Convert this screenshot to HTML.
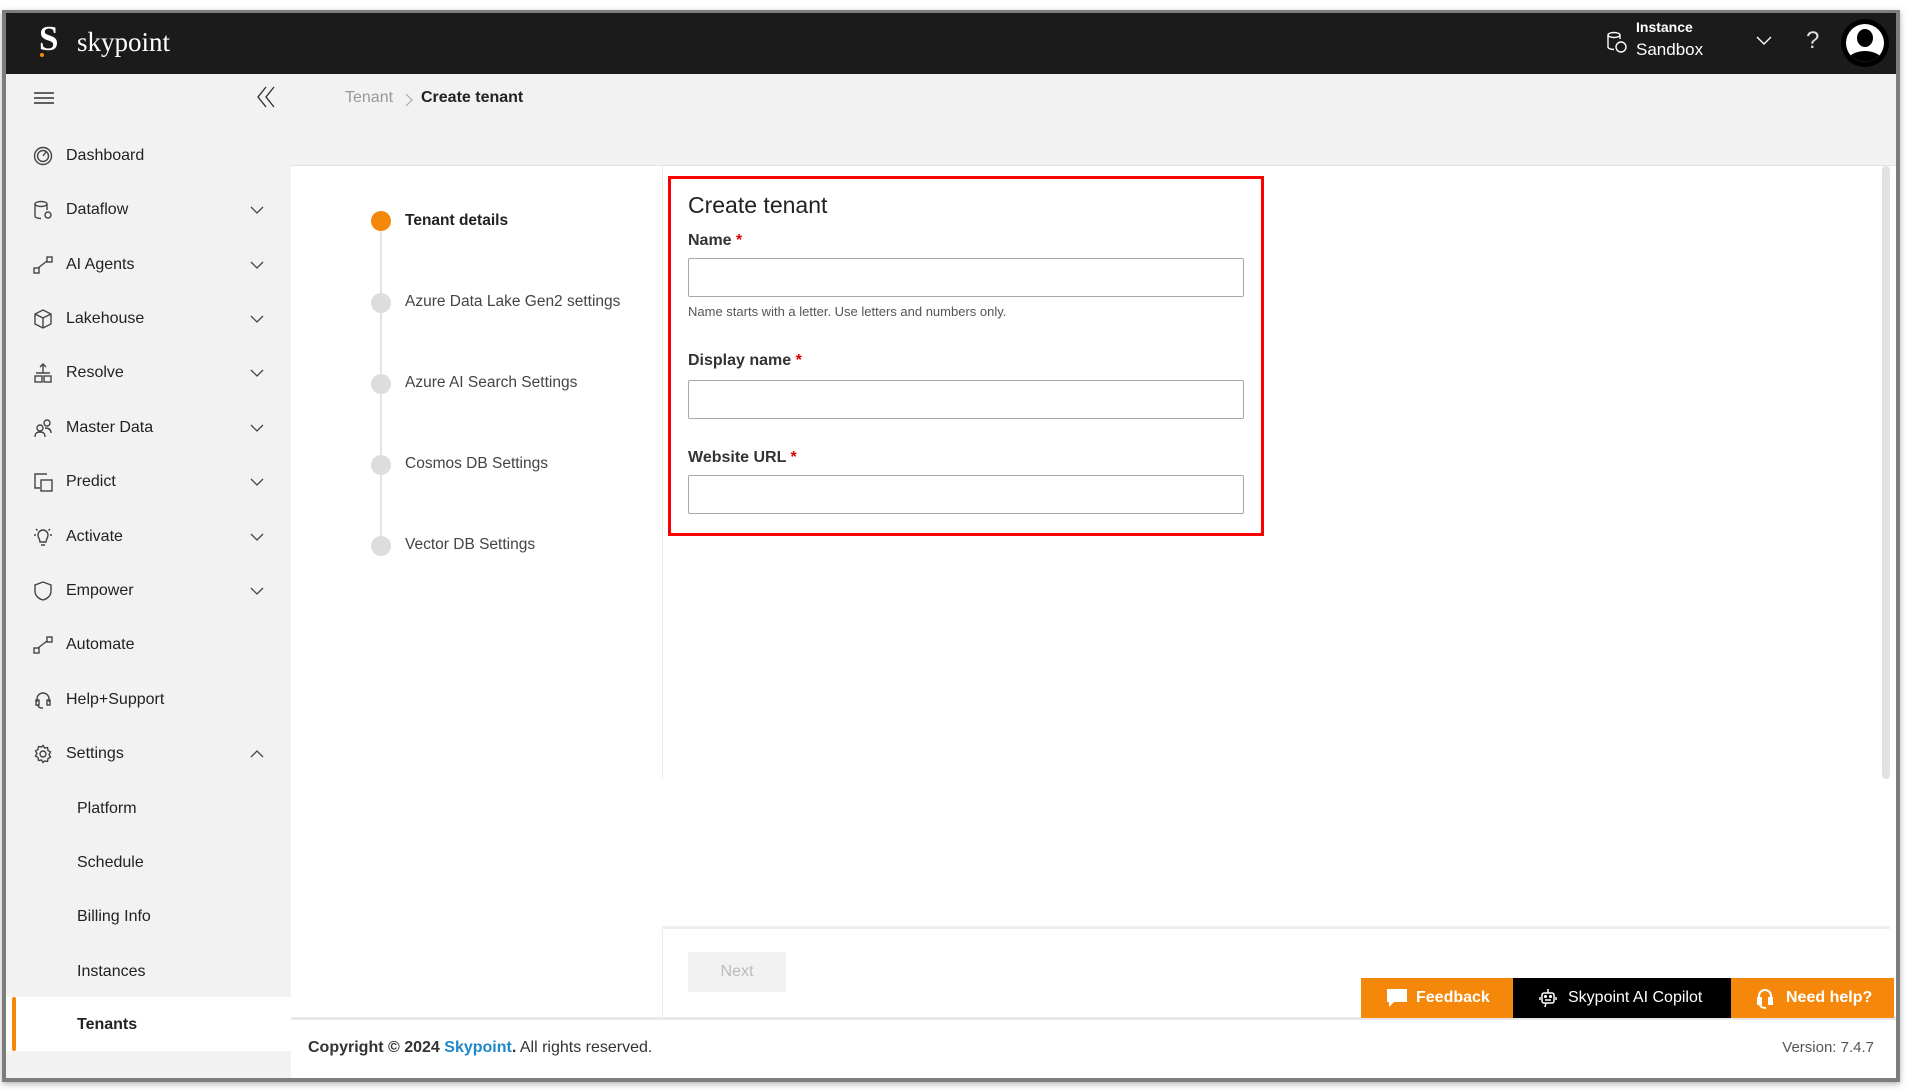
<!DOCTYPE html>
<html><head><meta charset="utf-8"><style>
*{box-sizing:border-box;margin:0;padding:0}
body{width:1920px;height:1090px;background:#fff;font-family:"Liberation Sans",sans-serif;color:#222;position:relative;overflow:hidden}
.frame{position:absolute;left:2px;top:10px;width:1898px;height:1072px;border:4px solid #7d7d7d;border-top-width:3px;box-shadow:0 2px 6px rgba(0,0,0,.3);overflow:hidden;background:#fff}
.hdr{position:absolute;left:0;top:0;right:0;height:61px;background:#1b1b1b;color:#fff}
.side{position:absolute;left:0;top:61px;width:285px;bottom:0;background:#f2f2f2}
.abs{position:absolute}
.nav{position:absolute;left:0;width:285px;height:40px;display:flex;align-items:center;font-size:16px;color:#222}
.nav .ic{position:absolute;left:27px;width:20px;height:20px}
.nav .t{position:absolute;left:60px}
.nav .ch{position:absolute;left:244px;width:14px;height:14px}
.sub .t{left:71px}
.inp{position:absolute;left:682px;width:556px;height:39px;border:1px solid #a8a8a8;border-radius:2px;background:#fff}
.lbl{position:absolute;left:682px;font-size:16px;font-weight:bold;color:#333}
.lbl b{color:#d00;font-weight:bold}
.step{position:absolute;left:399px;font-size:15.5px;color:#444}
.dot{position:absolute;left:365px;width:20px;height:20px;border-radius:50%;background:#ddd}
</style></head><body>
<div class="frame">
 <div class="hdr">
  <div class="abs" style="left:33px;top:6px;font-family:'Liberation Serif',serif;font-size:35px;font-weight:bold;color:#fff">S</div>
  <div class="abs" style="left:34px;top:40px;width:4px;height:4px;border-radius:50%;background:#f5880a"></div>
  <div class="abs" style="left:71px;top:14px;font-family:'Liberation Serif',serif;font-size:27px;color:#fff">skypoint</div>
  <svg class="abs" style="left:1600px;top:18px" width="22" height="24" viewBox="0 0 22 24" fill="none" stroke="#fff" stroke-width="1.4"><ellipse cx="8" cy="4" rx="6" ry="2.5"/><path d="M2 4v12c0 1.4 2.7 2.5 6 2.5M14 4v4"/><circle cx="15" cy="16" r="5"/></svg>
  <div class="abs" style="left:1630px;top:6px;font-size:14px;font-weight:bold">Instance</div>
  <div class="abs" style="left:1630px;top:27px;font-size:17px">Sandbox</div>
  <svg class="abs" style="left:1750px;top:22px" width="16" height="12"><path d="M1 2l7 7 7-7" stroke="#fff" fill="none" stroke-width="1.4"/></svg>
  <div class="abs" style="left:1800px;top:14px;font-size:24px;color:#ddd">?</div>
  <div class="abs" style="left:1835px;top:6px;width:48px;height:48px;border-radius:50%;background:#000;overflow:hidden">
   <div class="abs" style="left:5px;top:5px;width:38px;height:38px;border-radius:50%;background:#fff;overflow:hidden">
    <div class="abs" style="left:11px;top:5px;width:16px;height:18px;border-radius:50%;background:#000"></div>
    <div class="abs" style="left:1px;top:27px;width:36px;height:22px;border-radius:50%;background:#000"></div>
   </div></div>
 </div>
 <div class="side">
  <svg class="abs" style="left:28px;top:17px" width="20" height="14" stroke="#333" stroke-width="1.4"><path d="M0 2h20M0 7h20M0 12h20"/></svg>
  <svg class="abs" style="left:250px;top:12px" width="20" height="22" fill="none" stroke="#333" stroke-width="1.4"><path d="M10 1L2 11l8 10M18 1l-8 10 8 10"/></svg>
 </div>
 <div class="nav" style="top:123px"><svg class="ic" viewBox="0 0 20 20" fill="none" stroke="#444" stroke-width="1.4"><circle cx="10" cy="10" r="8.5"/><circle cx="10" cy="10" r="5.5"/><path d="M10 10l3-4"/></svg><span class="t">Dashboard</span></div>
 <div class="nav" style="top:177px"><svg class="ic" viewBox="0 0 20 20" fill="none" stroke="#444" stroke-width="1.4"><ellipse cx="8" cy="4" rx="6" ry="2.5"/><path d="M2 4v12c0 1.4 2.7 2.5 6 2.5M14 4v6"/><circle cx="15" cy="15" r="3"/></svg><span class="t">Dataflow</span><svg class="ch"><path d="M1 4l6 6 6-6" stroke="#444" fill="none" stroke-width="1.3"/></svg></div>
 <div class="nav" style="top:232px"><svg class="ic" viewBox="0 0 20 20" fill="none" stroke="#444" stroke-width="1.4"><rect x="1" y="13" width="5" height="5"/><rect x="14" y="2" width="5" height="5"/><path d="M5 13l9-7"/></svg><span class="t">AI Agents</span><svg class="ch"><path d="M1 4l6 6 6-6" stroke="#444" fill="none" stroke-width="1.3"/></svg></div>
 <div class="nav" style="top:286px"><svg class="ic" viewBox="0 0 20 20" fill="none" stroke="#444" stroke-width="1.4"><path d="M10 1l8 4v10l-8 4-8-4V5zM2 5l8 4 8-4M10 9v10"/></svg><span class="t">Lakehouse</span><svg class="ch"><path d="M1 4l6 6 6-6" stroke="#444" fill="none" stroke-width="1.3"/></svg></div>
 <div class="nav" style="top:340px"><svg class="ic" viewBox="0 0 20 20" fill="none" stroke="#444" stroke-width="1.4"><path d="M10 1v9M7 4l3-3 3 3M3 10h14"/><rect x="2" y="13" width="7" height="6"/><rect x="11" y="13" width="7" height="6"/></svg><span class="t">Resolve</span><svg class="ch"><path d="M1 4l6 6 6-6" stroke="#444" fill="none" stroke-width="1.3"/></svg></div>
 <div class="nav" style="top:395px"><svg class="ic" viewBox="0 0 20 20" fill="none" stroke="#444" stroke-width="1.4"><circle cx="7" cy="10" r="3"/><circle cx="14" cy="5" r="3"/><path d="M2 19c0-4 2-5 5-5s5 1 5 5M12 10c3 0 6 1 6 5"/></svg><span class="t">Master Data</span><svg class="ch"><path d="M1 4l6 6 6-6" stroke="#444" fill="none" stroke-width="1.3"/></svg></div>
 <div class="nav" style="top:449px"><svg class="ic" viewBox="0 0 20 20" fill="none" stroke="#444" stroke-width="1.4"><path d="M14 2H2v14h5"/><rect x="8" y="8" width="11" height="11"/></svg><span class="t">Predict</span><svg class="ch"><path d="M1 4l6 6 6-6" stroke="#444" fill="none" stroke-width="1.3"/></svg></div>
 <div class="nav" style="top:504px"><svg class="ic" viewBox="0 0 20 20" fill="none" stroke="#444" stroke-width="1.4"><path d="M7 15c0-3-2-4-2-7a5 5 0 0110 0c0 3-2 4-2 7zM8 18h4M1 8h2M17 8h2M3 2l1.5 1.5M17 2l-1.5 1.5"/></svg><span class="t">Activate</span><svg class="ch"><path d="M1 4l6 6 6-6" stroke="#444" fill="none" stroke-width="1.3"/></svg></div>
 <div class="nav" style="top:558px"><svg class="ic" viewBox="0 0 20 20" fill="none" stroke="#444" stroke-width="1.4"><path d="M10 1l8 3v6c0 5-4 8-8 9-4-1-8-4-8-9V4z"/></svg><span class="t">Empower</span><svg class="ch"><path d="M1 4l6 6 6-6" stroke="#444" fill="none" stroke-width="1.3"/></svg></div>
 <div class="nav" style="top:612px"><svg class="ic" viewBox="0 0 20 20" fill="none" stroke="#444" stroke-width="1.4"><rect x="1" y="13" width="5" height="5"/><rect x="14" y="2" width="5" height="5"/><path d="M5 13l9-7"/></svg><span class="t">Automate</span></div>
 <div class="nav" style="top:667px"><svg class="ic" viewBox="0 0 20 20" fill="none" stroke="#444" stroke-width="1.4"><path d="M4 12V9a6 6 0 0112 0v3"/><rect x="3" y="10" width="3" height="5"/><rect x="14" y="10" width="3" height="5"/><path d="M5 15c0 3 3 3 5 3"/></svg><span class="t">Help+Support</span></div>
 <div class="nav" style="top:721px"><svg class="ic" viewBox="0 0 20 20" fill="none" stroke="#444" stroke-width="1.4"><circle cx="10" cy="10" r="3"/><path d="M10 1.5l1.5 2.5 3-.5.5 3 2.5 1.5-1.5 2.5 1.5 2.5-2.5 1.5-.5 3-3-.5L10 18.5 8.5 16l-3 .5-.5-3L2.5 12 4 9.5 2.5 7 5 5.5l.5-3 3 .5z"/></svg><span class="t">Settings</span><svg class="ch"><path d="M1 10l6-6 6 6" stroke="#444" fill="none" stroke-width="1.3"/></svg></div>
 <div class="nav sub" style="top:776px"><span class="t">Platform</span></div>
 <div class="nav sub" style="top:830px"><span class="t">Schedule</span></div>
 <div class="nav sub" style="top:884px"><span class="t">Billing Info</span></div>
 <div class="nav sub" style="top:939px"><span class="t">Instances</span></div>
 <div class="abs" style="left:0;top:984px;width:285px;height:54px;background:#fff"></div>
 <div class="abs" style="left:6px;top:984px;width:4px;height:54px;background:#f5880a;border-radius:2px"></div>
 <div class="nav sub" style="top:992px;font-weight:bold"><span class="t">Tenants</span></div>
 <div class="abs" style="left:285px;top:61px;right:0;height:92px;background:#f2f2f2;border-bottom:1px solid #e4e4e4"></div>
 <div class="abs" style="left:339px;top:76px;font-size:16px;color:#999">Tenant</div>
 <svg class="abs" style="left:398px;top:79px" width="10" height="16"><path d="M2 2l6 6-6 6" stroke="#aaa" fill="none" stroke-width="1.2"/></svg>
 <div class="abs" style="left:415px;top:76px;font-size:16px;color:#222;font-weight:bold">Create tenant</div>
 <div class="abs" style="left:656px;top:153px;width:1px;height:613px;background:#eee"></div>
 <div class="abs" style="left:374px;top:216px;width:2px;height:318px;background:#e3e3e3"></div>
 <div class="dot" style="top:198px;background:#f5880a"></div>
 <div class="step" style="top:199px;font-weight:bold;color:#222">Tenant details</div>
 <div class="dot" style="top:280px"></div><div class="step" style="top:280px">Azure Data Lake Gen2 settings</div>
 <div class="dot" style="top:361px"></div><div class="step" style="top:361px">Azure AI Search Settings</div>
 <div class="dot" style="top:442px"></div><div class="step" style="top:442px">Cosmos DB Settings</div>
 <div class="dot" style="top:523px"></div><div class="step" style="top:523px">Vector DB Settings</div>
 <div class="abs" style="left:662px;top:163px;width:596px;height:360px;border:3px solid #f00"></div>
 <div class="abs" style="left:682px;top:179px;font-size:23px;color:#222">Create tenant</div>
 <div class="lbl" style="top:219px">Name <b>*</b></div>
 <div class="inp" style="top:245px"></div>
 <div class="abs" style="left:682px;top:291px;font-size:13px;color:#555">Name starts with a letter. Use letters and numbers only.</div>
 <div class="lbl" style="top:339px">Display name <b>*</b></div>
 <div class="inp" style="top:367px"></div>
 <div class="lbl" style="top:436px">Website URL <b>*</b></div>
 <div class="inp" style="top:462px"></div>
 <div class="abs" style="left:1876px;top:153px;width:8px;height:613px;background:#e2e2e2;border-radius:4px"></div>
 <div class="abs" style="left:656px;top:913px;right:6px;height:3px;background:#eee"></div>
 <div class="abs" style="left:656px;top:916px;width:1px;height:90px;background:#eee"></div>
 <div class="abs" style="left:682px;top:939px;width:98px;height:40px;background:#f2f2f2;border-radius:2px;color:#bbb;font-size:16px;text-align:center;line-height:40px">Next</div>
 <div class="abs" style="left:285px;top:1004px;right:0;height:3px;background:#e8e8e8"></div>
 <div class="abs" style="left:1355px;top:965px;width:152px;height:40px;background:#f5880a;color:#fff;font-weight:bold;font-size:16px;line-height:40px;padding-left:55px">Feedback
  <svg class="abs" style="left:26px;top:11px" width="20" height="20"><path d="M0 0h20v13H7l-5 5v-5H0z" fill="#fff"/></svg></div>
 <div class="abs" style="left:1507px;top:965px;width:218px;height:40px;background:#000;color:#fff;font-size:16px;line-height:40px;padding-left:55px">Skypoint AI Copilot
  <svg class="abs" style="left:26px;top:10px" width="18" height="20" fill="none" stroke="#fff" stroke-width="1.5"><rect x="3" y="5" width="12" height="10" rx="2"/><path d="M9 1v4M1 9v3M17 9v3M6 12h6M7 15l-1 4"/><circle cx="6.5" cy="8.5" r=".8" fill="#fff"/><circle cx="11.5" cy="8.5" r=".8" fill="#fff"/></svg></div>
 <div class="abs" style="left:1725px;top:965px;width:163px;height:40px;background:#f5880a;color:#fff;font-weight:bold;font-size:16px;line-height:40px;padding-left:55px">Need help?
  <svg class="abs" style="left:25px;top:10px" width="18" height="22" fill="none" stroke="#fff" stroke-width="2"><path d="M3 12V8a6 6 0 0112 0v4"/><rect x="2" y="10" width="3" height="6" fill="#fff"/><rect x="13" y="10" width="3" height="6" fill="#fff"/><path d="M4 16c0 3 3 4 6 4"/></svg></div>
 <div class="abs" style="left:302px;top:1026px;font-size:16px;color:#333"><b>Copyright © 2024 <span style="color:#1e88c8">Skypoint</span>.</b> All rights reserved.</div>
 <div class="abs" style="right:22px;top:1026px;font-size:15px;color:#555">Version: 7.4.7</div>
</div>
</body></html>
